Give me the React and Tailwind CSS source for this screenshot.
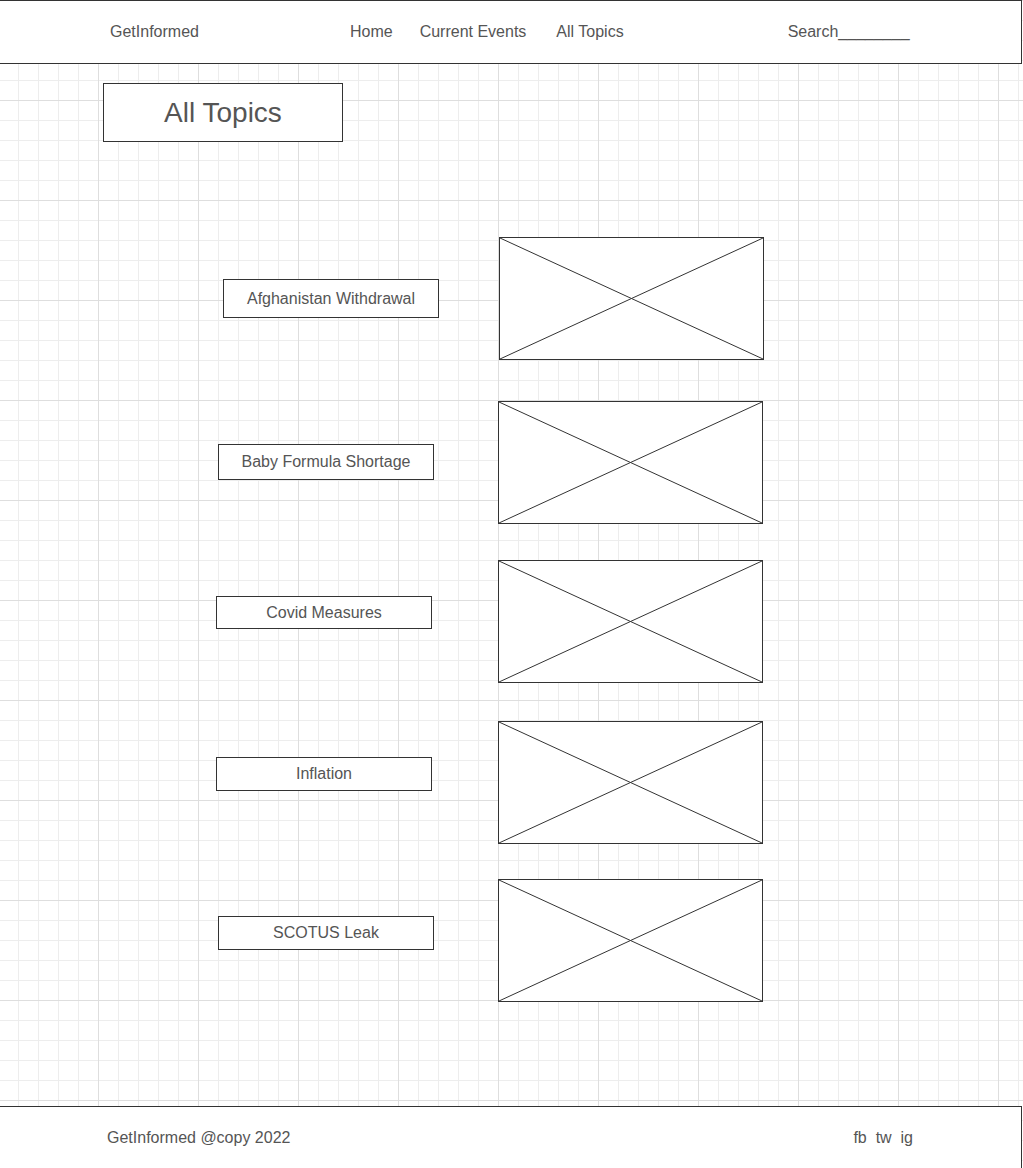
import React from 'react';

const topics = [
  { name: 'Afghanistan Withdrawal', gapTop: 'mt-[95px]', padL: 'pl-[223px]', labelTop: 'mt-[42px]', labelH: 'h-[39px]', imgL: 'ml-[60px]', imgW: 'w-[265px]', imgH: 'h-[123px]' },
  { name: 'Baby Formula Shortage', gapTop: 'mt-[41px]', padL: 'pl-[218px]', labelTop: 'mt-[43px]', labelH: 'h-[36px]', imgL: 'ml-[64px]', imgW: 'w-[265px]', imgH: 'h-[123px]' },
  { name: 'Covid Measures', gapTop: 'mt-[36px]', padL: 'pl-[216px]', labelTop: 'mt-[36px]', labelH: 'h-[33px]', imgL: 'ml-[66px]', imgW: 'w-[265px]', imgH: 'h-[123px]' },
  { name: 'Inflation', gapTop: 'mt-[38px]', padL: 'pl-[216px]', labelTop: 'mt-[36px]', labelH: 'h-[34px]', imgL: 'ml-[66px]', imgW: 'w-[265px]', imgH: 'h-[123px]' },
  { name: 'SCOTUS Leak', gapTop: 'mt-[35px]', padL: 'pl-[218px]', labelTop: 'mt-[37px]', labelH: 'h-[34px]', imgL: 'ml-[64px]', imgW: 'w-[265px]', imgH: 'h-[123px]' },
];

// placeholder box with a cross, like the wireframe image stub
const ImagePlaceholder = ({ className }) => (
  <div className={`border border-[#333] bg-white ${className}`}>
    <svg className="block w-full h-full" viewBox="0 0 100 100" preserveAspectRatio="none">
      <line x1="0" y1="0" x2="100" y2="100" stroke="#333" strokeWidth="1" vectorEffect="non-scaling-stroke" />
      <line x1="100" y1="0" x2="0" y2="100" stroke="#333" strokeWidth="1" vectorEffect="non-scaling-stroke" />
    </svg>
  </div>
);

export default function App() {
  return (
    <div className="w-[1023px] min-h-[1168px] flex flex-col font-['Liberation_Sans',Arial,sans-serif] text-[#555] bg-white bg-[image:linear-gradient(to_right,#dedede_1px,transparent_1px),linear-gradient(to_bottom,#dedede_1px,transparent_1px),linear-gradient(to_right,#ededed_1px,transparent_1px),linear-gradient(to_bottom,#ededed_1px,transparent_1px)] bg-[size:100px_100px,100px_100px,20px_20px,20px_20px] bg-[position:98px_0,98px_0,18px_0,18px_0]">
      {/* Header */}
      <header className="w-[1022px] h-[64px] shrink-0 bg-white border-t border-b border-r border-[#333] flex items-center text-[16px]">
        <div className="ml-[110px]">GetInformed</div>
        <nav className="ml-[151px] flex items-center">
          <span>Home</span>
          <span className="ml-[27px]">Current Events</span>
          <span className="ml-[30px]">All Topics</span>
        </nav>
        <div className="ml-[164px]">Search________</div>
      </header>

      {/* Content */}
      <main className="flex-1 flex flex-col">
        <div className="ml-[103px] mt-[19px] w-[240px] h-[59px] border border-[#333] bg-white flex items-center justify-center text-[28px]">
          All Topics
        </div>

        {topics.map((t) => (
          <div key={t.name} className={`flex items-start ${t.gapTop} ${t.padL}`}>
            <div className={`w-[216px] ${t.labelH} ${t.labelTop} border border-[#333] bg-white flex items-center justify-center text-[16px]`}>
              {t.name}
            </div>
            <ImagePlaceholder className={`${t.imgL} ${t.imgW} ${t.imgH}`} />
          </div>
        ))}
      </main>

      {/* Footer */}
      <footer className="w-[1022px] h-[62px] mt-[104px] shrink-0 bg-white border-t border-r border-[#333] flex items-center text-[16px]">
        <div className="ml-[107px]">GetInformed @copy 2022</div>
        <div className="ml-auto mr-[108px] whitespace-pre">fb  tw  ig</div>
      </footer>
    </div>
  );
}
